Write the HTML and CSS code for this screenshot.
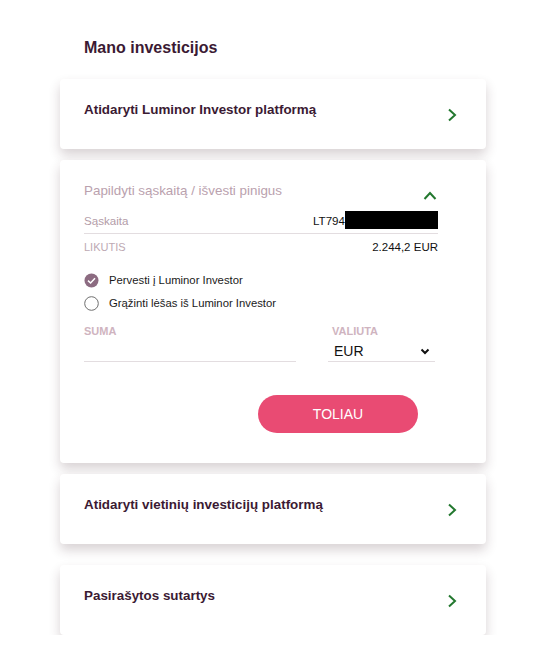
FILE: index.html
```html
<!DOCTYPE html>
<html lang="lt">
<head>
<meta charset="utf-8">
<title>Mano investicijos</title>
<link rel="stylesheet" href="styles.css">
</head>
<body>
<div class="page">
  <h1 class="title">Mano investicijos</h1>

  <div class="card card-link">
    <span class="link-text">Atidaryti Luminor Investor platformą</span>
    <svg class="chev-right" width="10" height="14" viewBox="0 0 10 14"><path d="M2 1.5 L8 7 L2 12.5" fill="none" stroke="#23782f" stroke-width="2"/></svg>
  </div>

  <div class="card card-open">
    <div class="open-head">
      <span class="open-title">Papildyti sąskaitą / išvesti pinigus</span>
      <svg class="chev-up" width="14" height="9" viewBox="0 0 14 9"><path d="M1.5 8 L7 2 L12.5 8" fill="none" stroke="#23782f" stroke-width="2"/></svg>
    </div>
    <div class="row row-account">
      <span class="row-label">Sąskaita</span>
      <span class="acc-value">LT794<span class="redact"></span></span>
    </div>
    <div class="row row-balance">
      <span class="row-label caps">LIKUTIS</span>
      <span class="value">2.244,2 EUR</span>
    </div>
    <div class="radio radio-first">
      <svg width="15" height="15" viewBox="0 0 15 15"><circle cx="7.5" cy="7.5" r="7" fill="#8c6b81"/><path d="M4 7.6 L6.6 10 L11 5.2" fill="none" stroke="#fff" stroke-width="1.5"/></svg>
      <span>Pervesti į Luminor Investor</span>
    </div>
    <div class="radio">
      <svg width="15" height="15" viewBox="0 0 15 15"><circle cx="7.5" cy="7.5" r="6.8" fill="#fff" stroke="#6e6e6e" stroke-width="1"/></svg>
      <span>Grąžinti lėšas iš Luminor Investor</span>
    </div>
    <div class="fields">
      <div class="field">
        <div class="field-label">SUMA</div>
        <div class="field-input"></div>
      </div>
      <div class="field">
        <div class="field-label pad">VALIUTA</div>
        <div class="field-input select">
          <span>EUR</span>
          <svg width="10" height="7" viewBox="0 0 10 7"><path d="M1.5 1.5 L5 5 L8.5 1.5" fill="none" stroke="#111" stroke-width="2"/></svg>
        </div>
      </div>
    </div>
    <div class="actions">
      <button class="btn">TOLIAU</button>
    </div>
  </div>

  <div class="card card-link card-third">
    <span class="link-text">Atidaryti vietinių investicijų platformą</span>
    <svg class="chev-right" width="10" height="14" viewBox="0 0 10 14"><path d="M2 1.5 L8 7 L2 12.5" fill="none" stroke="#23782f" stroke-width="2"/></svg>
  </div>

  <div class="card card-link card-fourth">
    <span class="link-text">Pasirašytos sutartys</span>
    <svg class="chev-right" width="10" height="14" viewBox="0 0 10 14"><path d="M2 1.5 L8 7 L2 12.5" fill="none" stroke="#23782f" stroke-width="2"/></svg>
  </div>
</div>
</body>
</html>
```

FILE: styles.css
```css
html, body {
  margin: 0;
  padding: 0;
  background: #ffffff;
  font-family: "Liberation Sans", Arial, sans-serif;
}

.page {
  width: 426px;
  padding: 38px 0 0 60px;
}

.title {
  margin: 0 0 21px 24px;
  font-size: 16px;
  line-height: 20px;
  font-weight: bold;
  color: #3b1a33;
}

.card {
  background: #fff;
  border-radius: 4px;
  box-shadow: 0 6px 12px rgba(60, 30, 40, 0.2);
  box-sizing: border-box;
}

.card-link {
  height: 70px;
  padding: 23px 29px 0 24px;
  display: flex;
  justify-content: space-between;
  align-items: flex-start;
}

.link-text {
  font-size: 13.4px;
  line-height: 16px;
  font-weight: bold;
  color: #3b1a33;
}

.chev-right {
  margin-top: 6px;
}

.card-open {
  margin-top: 11px;
  padding: 22px 48px 30px 24px;
}

.open-head {
  display: flex;
  justify-content: space-between;
  align-items: flex-end;
  height: 18px;
}

.open-title {
  font-size: 13.4px;
  line-height: 18px;
  color: #baa1ae;
}

.chev-up {
  margin-right: 1px;
}

.row {
  display: flex;
  justify-content: space-between;
  align-items: center;
}

.row-account {
  margin-top: 11px;
  height: 18px;
  padding-bottom: 4px;
  border-bottom: 1px solid #e3dde0;
}

.row-balance {
  margin-top: 6px;
  height: 14px;
}

.row-label {
  color: #b39ca8;
  font-size: 11.6px;
}

.row-label.caps {
  font-size: 11px;
  color: #bda9b3;
}

.acc-value {
  display: flex;
  align-items: center;
  color: #111;
  font-size: 11.6px;
  width: 125px;
}

.redact {
  display: inline-block;
  width: 95px;
  height: 18px;
  background: #000;
}

.value {
  color: #111;
  font-size: 11.5px;
}

.radio {
  display: flex;
  align-items: center;
  gap: 10px;
  height: 16px;
  margin-top: 7px;
  font-size: 11.3px;
  color: #1a1a1a;
}

.radio-first {
  margin-top: 18px;
}

.fields {
  display: grid;
  grid-template-columns: 212px 107px;
  column-gap: 32px;
  margin-top: 13px;
}

.field-label {
  font-size: 11px;
  line-height: 14px;
  font-weight: bold;
  color: #cfb4c0;
}

.field-label.pad {
  padding-left: 4px;
}

.field-input {
  height: 24px;
  border-bottom: 1px solid #e3dde0;
  box-sizing: border-box;
}

.select {
  display: flex;
  align-items: flex-end;
  justify-content: space-between;
  padding: 0 5px 2px 6px;
  font-size: 14px;
  line-height: 16px;
  color: #111;
}

.select svg {
  margin-bottom: 4px;
}

.actions {
  display: flex;
  justify-content: flex-end;
  padding-right: 20px;
  margin-top: 33px;
}

.btn {
  width: 160px;
  height: 38px;
  border: none;
  border-radius: 19px;
  background: #e94b73;
  color: #fff;
  font-family: "Liberation Sans", Arial, sans-serif;
  font-size: 14px;
  padding: 0;
}

.card-third {
  margin-top: 11px;
}

.card-fourth {
  margin-top: 21px;
}
```
